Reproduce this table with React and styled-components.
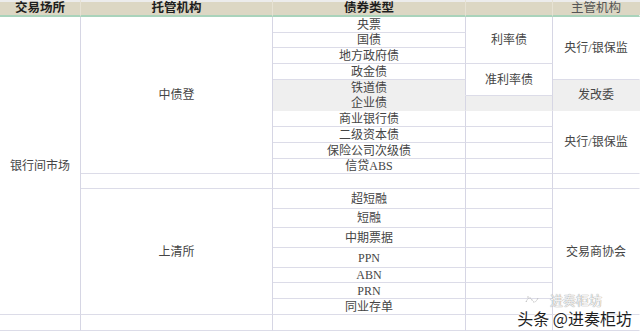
import React from 'react';
import styled, { createGlobalStyle } from 'styled-components';

const GlobalStyle = createGlobalStyle`
  html, body {
    margin: 0;
    padding: 0;
    background: #ffffff;
  }
`;

const rowHeights = [16, 15, 16, 16, 16, 15, 16, 16, 16, 15, 15, 20, 19, 20, 20, 15, 16, 16, 16];

// body rows start at grid row 2 (row 1 is header)
const bonds = [
  { name: '央票' },
  { name: '国债' },
  { name: '地方政府债' },
  { name: '政金债' },
  { name: '铁道债', gray: true },
  { name: '企业债', gray: true },
  { name: '商业银行债' },
  { name: '二级资本债' },
  { name: '保险公司次级债' },
  { name: '信贷ABS' },
  { name: '' },
  { name: '超短融' },
  { name: '短融' },
  { name: '中期票据' },
  { name: 'PPN' },
  { name: 'ABN' },
  { name: 'PRN' },
  { name: '同业存单' },
  { name: '' },
];

// column 4: merged or single cells
const kinds = [
  { row: 2, span: 3, text: '利率债' },
  { row: 5, span: 2, text: '准利率债' },
  { row: 7, span: 1, text: '', gray: true },
  ...Array.from({ length: 13 }, (_, i) => ({ row: 8 + i, span: 1, text: '' })),
];

const regulators = [
  { row: 2, span: 4, text: '央行/银保监' },
  { row: 6, span: 2, text: '发改委', gray: true },
  { row: 8, span: 4, text: '央行/银保监' },
  { row: 12, span: 1, text: '' },
  { row: 13, span: 7, text: '交易商协会' },
  { row: 20, span: 1, text: '' },
];

const App = () => {
  return (
    <Page>
      <GlobalStyle />
      <Table>
        <Head $col={1} $bold>交易场所</Head>
        <Head $col={2} $bold>托管机构</Head>
        <Head $col={3} $bold>债券类型</Head>
        <Head $col={4} />
        <Head $col={5}>主管机构</Head>

        <Cell $col={1} $row={2} $span={18}>银行间市场</Cell>
        <Cell $col={1} $row={20} $span={1} />

        <Cell $col={2} $row={2} $span={10}>中债登</Cell>
        <Cell $col={2} $row={12} $span={1} />
        <Cell $col={2} $row={13} $span={7}>上清所</Cell>
        <Cell $col={2} $row={20} $span={1} />

        {bonds.map((b, i) => (
          <Cell key={'b' + i} $col={3} $row={i + 2} $span={1} $gray={b.gray}>
            {b.name}
          </Cell>
        ))}

        {kinds.map((k, i) => (
          <Cell key={'k' + i} $col={4} $row={k.row} $span={k.span} $gray={k.gray}>
            {k.text}
          </Cell>
        ))}

        {regulators.map((r, i) => (
          <Cell key={'r' + i} $col={5} $row={r.row} $span={r.span} $gray={r.gray} $last>
            {r.text}
          </Cell>
        ))}
      </Table>

      <Watermark>
        <Faint>
          <Swirl viewBox="0 0 16 10" width="16" height="10">
            <path d="M2 7 C4 2, 7 2, 8 5 C9 8, 12 8, 14 3" fill="none" stroke="#b9b9b9" strokeWidth="1" strokeDasharray="1.5 1.2" />
            <circle cx="4" cy="2" r="0.8" fill="#c4c4c4" />
          </Swirl>
          <FaintText>进奏柜坊</FaintText>
        </Faint>
        <Mark>头条 @进奏柜坊</Mark>
      </Watermark>
    </Page>
  );
};

export default App;

const Page = styled.div`
  position: relative;
  width: 640px;
  height: 331px;
  overflow: hidden;
  background: #ffffff;
  font-family: "Liberation Serif", "Noto Sans CJK SC", serif;
  color: #454545;
`;

const Table = styled.div`
  display: grid;
  grid-template-columns: 81px 192px 193px 87px 87px;
  grid-template-rows: 17px ${rowHeights.map((h) => h + 'px').join(' ')};
`;

const Head = styled.div`
  grid-column: ${(p) => p.$col};
  grid-row: 1;
  box-sizing: border-box;
  display: flex;
  align-items: center;
  justify-content: center;
  padding-top: 2px;
  background: linear-gradient(to bottom, #ececec 0, #ececec 2px, #dcd7c4 2px);
  border-bottom: 2px solid #a9d3bb;
  border-right: 1px solid ${(p) => (p.$col === 5 ? 'transparent' : '#e6e2d4')};
  font-size: 12.5px;
  font-weight: ${(p) => (p.$bold ? 700 : 400)};
  color: ${(p) => (p.$bold ? '#1e1e1e' : '#555555')};
  line-height: 1;
`;

const Cell = styled.div`
  grid-column: ${(p) => p.$col};
  grid-row: ${(p) => p.$row} / span ${(p) => p.$span};
  box-sizing: border-box;
  display: flex;
  align-items: center;
  justify-content: center;
  background: ${(p) => (p.$gray ? '#efefef' : '#ffffff')};
  border-bottom: 1px solid ${(p) => (p.$gray ? '#efefef' : '#dcdce8')};
  border-right: 1px solid ${(p) => (p.$last ? 'transparent' : '#d6d6e4')};
  font-size: 12px;
  line-height: 1;
  white-space: nowrap;
`;

const Watermark = styled.div`
  position: absolute;
  right: 8px;
  bottom: 5px;
  display: flex;
  flex-direction: column;
  align-items: flex-end;
  pointer-events: none;
`;

const Faint = styled.div`
  display: flex;
  align-items: center;
  gap: 10px;
  margin-right: 30px;
  margin-bottom: 4px;
  line-height: 1;
`;

const Swirl = styled.svg`
  display: block;
`;

const FaintText = styled.span`
  font-family: "Noto Sans CJK SC", sans-serif;
  font-size: 13px;
  line-height: 1;
  color: rgba(255, 255, 255, 0.9);
  text-shadow: 0 0 1px #9a9a9a, 0 0 1px #9a9a9a;
`;

const Mark = styled.span`
  font-family: "Noto Sans CJK SC", sans-serif;
  font-size: 16px;
  line-height: 1;
  color: #1f1f1f;
  text-shadow: 0 0 2px #ffffff, 0 0 2px #ffffff, 0 0 3px #ffffff;
`;
